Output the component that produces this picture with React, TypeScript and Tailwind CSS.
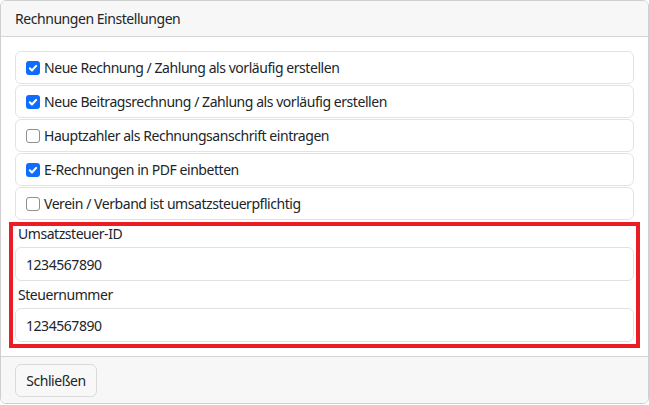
import React from "react";

const rows: { label: string; checked: boolean }[] = [
  { label: "Neue Rechnung / Zahlung als vorläufig erstellen", checked: true },
  { label: "Neue Beitragsrechnung / Zahlung als vorläufig erstellen", checked: true },
  { label: "Hauptzahler als Rechnungsanschrift eintragen", checked: false },
  { label: "E-Rechnungen in PDF einbetten", checked: true },
  { label: "Verein / Verband ist umsatzsteuerpflichtig", checked: false },
];

function Check({ checked }: { checked: boolean }) {
  if (checked) {
    return (
      <span className="flex h-[14px] w-[14px] shrink-0 items-center justify-center rounded-[3px] bg-[#0d6efd]">
        <svg viewBox="0 0 20 20" className="h-[14px] w-[14px]">
          <path d="M5.5 10.5l3 3l6-6.5" fill="none" stroke="#fff" strokeWidth="3" strokeLinecap="round" strokeLinejoin="round" />
        </svg>
      </span>
    );
  }
  return <span className="h-[14px] w-[14px] shrink-0 rounded-[3px] border border-[#8f8f8f] bg-white" />;
}

export default function App() {
  return (
    <div className="h-[405px] w-[649px] bg-white text-[14px] tracking-[-0.45px] text-[#212529]" style={{ fontFamily: '"Noto Sans", "Open Sans", sans-serif' }}>
      <div className="flex h-[404px] flex-col overflow-hidden rounded-[6px] border border-[#cfcfcf]">
        <div className="flex h-[36px] shrink-0 items-center border-b border-[#d4d4d4] bg-[#f7f7f7] px-[14px]">
          Rechnungen Einstellungen
        </div>
        <div className="flex-1 px-[14px] pt-[14px]">
          <div className="flex flex-col gap-[1px]">
            {rows.map((r) => (
              <div key={r.label} className="flex h-[33px] items-center gap-[4px] rounded-[6px] border border-[#e2e3e5] pl-[10px]">
                <Check checked={r.checked} />
                <span>{r.label}</span>
              </div>
            ))}
          </div>
          <div className="-mx-[6px] mt-[2px] border-4 border-[#ec1c24] px-[2px] pb-[2px]">
            <div className="h-[21px] pl-[3px] leading-[16px]">Umsatzsteuer-ID</div>
            <div className="flex h-[34px] items-center rounded-[6px] border border-[#dee2e6] pl-[10px]">1234567890</div>
            <div className="mt-[6px] h-[21px] pl-[3px] leading-[16px]">Steuernummer</div>
            <div className="flex h-[34px] items-center rounded-[6px] border border-[#dee2e6] pl-[10px]">1234567890</div>
          </div>
        </div>
        <div className="flex h-[47px] shrink-0 items-center border-t border-[#d4d4d4] bg-[#f7f7f7] px-[14px]">
          <div className="flex h-[33px] w-[82px] items-center justify-center rounded-[6px] border border-[#dadada] bg-[#f8f8f8]">
            Schließen
          </div>
        </div>
      </div>
    </div>
  );
}
